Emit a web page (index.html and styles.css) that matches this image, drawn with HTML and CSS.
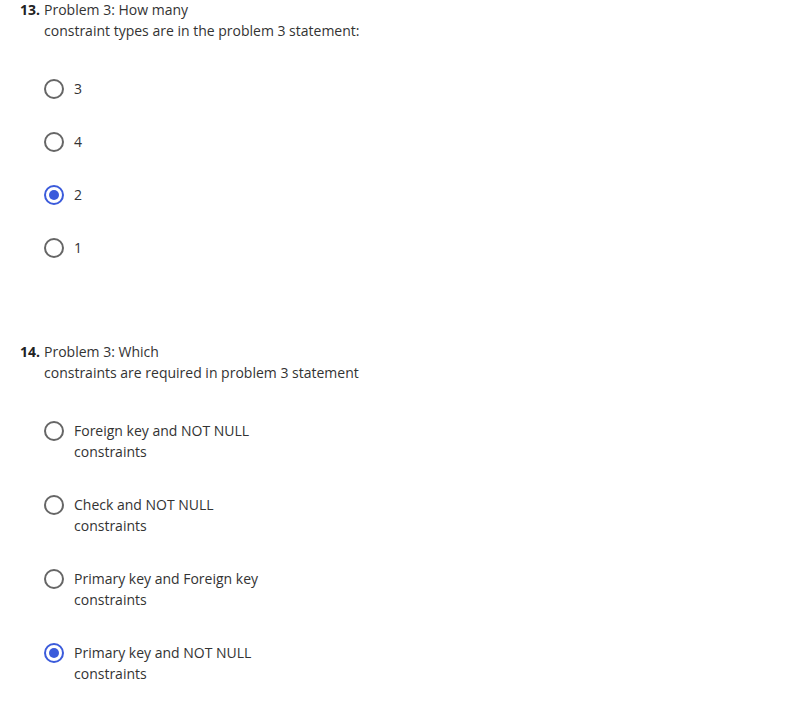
FILE: index.html
```html
<!DOCTYPE html>
<html>
<head>
<meta charset="utf-8">
<link rel="stylesheet" href="styles.css">
</head>
<body>
<div class="quiz">
  <section class="question">
    <div class="q-head">
      <span class="q-num">13.</span>
      <div class="q-text">Problem 3: How many<br>constraint types are in the problem 3 statement:</div>
    </div>
    <div class="options">
      <label class="option"><span class="radio"></span><span class="label">3</span></label>
      <label class="option"><span class="radio"></span><span class="label">4</span></label>
      <label class="option"><span class="radio checked"></span><span class="label">2</span></label>
      <label class="option"><span class="radio"></span><span class="label">1</span></label>
    </div>
  </section>
  <section class="question">
    <div class="q-head">
      <span class="q-num">14.</span>
      <div class="q-text">Problem 3: Which<br>constraints are required in problem 3 statement</div>
    </div>
    <div class="options">
      <label class="option"><span class="radio"></span><span class="label">Foreign key and NOT NULL constraints</span></label>
      <label class="option"><span class="radio"></span><span class="label">Check and NOT NULL constraints</span></label>
      <label class="option"><span class="radio"></span><span class="label">Primary key and Foreign key constraints</span></label>
      <label class="option"><span class="radio checked"></span><span class="label">Primary key and NOT NULL constraints</span></label>
    </div>
  </section>
</div>
</body>
</html>
```
FILE: styles.css
```css
html, body {
  margin: 0;
  padding: 0;
  background: #ffffff;
}
body {
  font-family: "Open Sans", "Liberation Sans", sans-serif;
  font-size: 14px;
  line-height: 21px;
  color: #333333;
}
.quiz {
  padding: 0 20px;
  margin-top: -1px;
  display: flex;
  flex-direction: column;
  gap: 83px;
}
.q-head {
  display: flex;
  align-items: baseline;
  gap: 4px;
}
.q-num {
  font-weight: 700;
  font-size: 14px;
  color: #222;
}
.options {
  display: flex;
  flex-direction: column;
  gap: 32px;
  padding-left: 24px;
  margin-top: 37px;
}
.option {
  display: flex;
  align-items: flex-start;
  gap: 10px;
}
.radio {
  box-sizing: border-box;
  width: 20px;
  height: 20px;
  border: 2px solid #666666;
  border-radius: 50%;
  flex: none;
  margin-top: 0.5px;
  display: flex;
  align-items: center;
  justify-content: center;
}
.radio.checked {
  border-color: #3b5bdb;
}
.radio.checked::after {
  content: "";
  width: 10px;
  height: 10px;
  border-radius: 50%;
  background: #3b5bdb;
}
.label {
  max-width: 200px;
}
```
